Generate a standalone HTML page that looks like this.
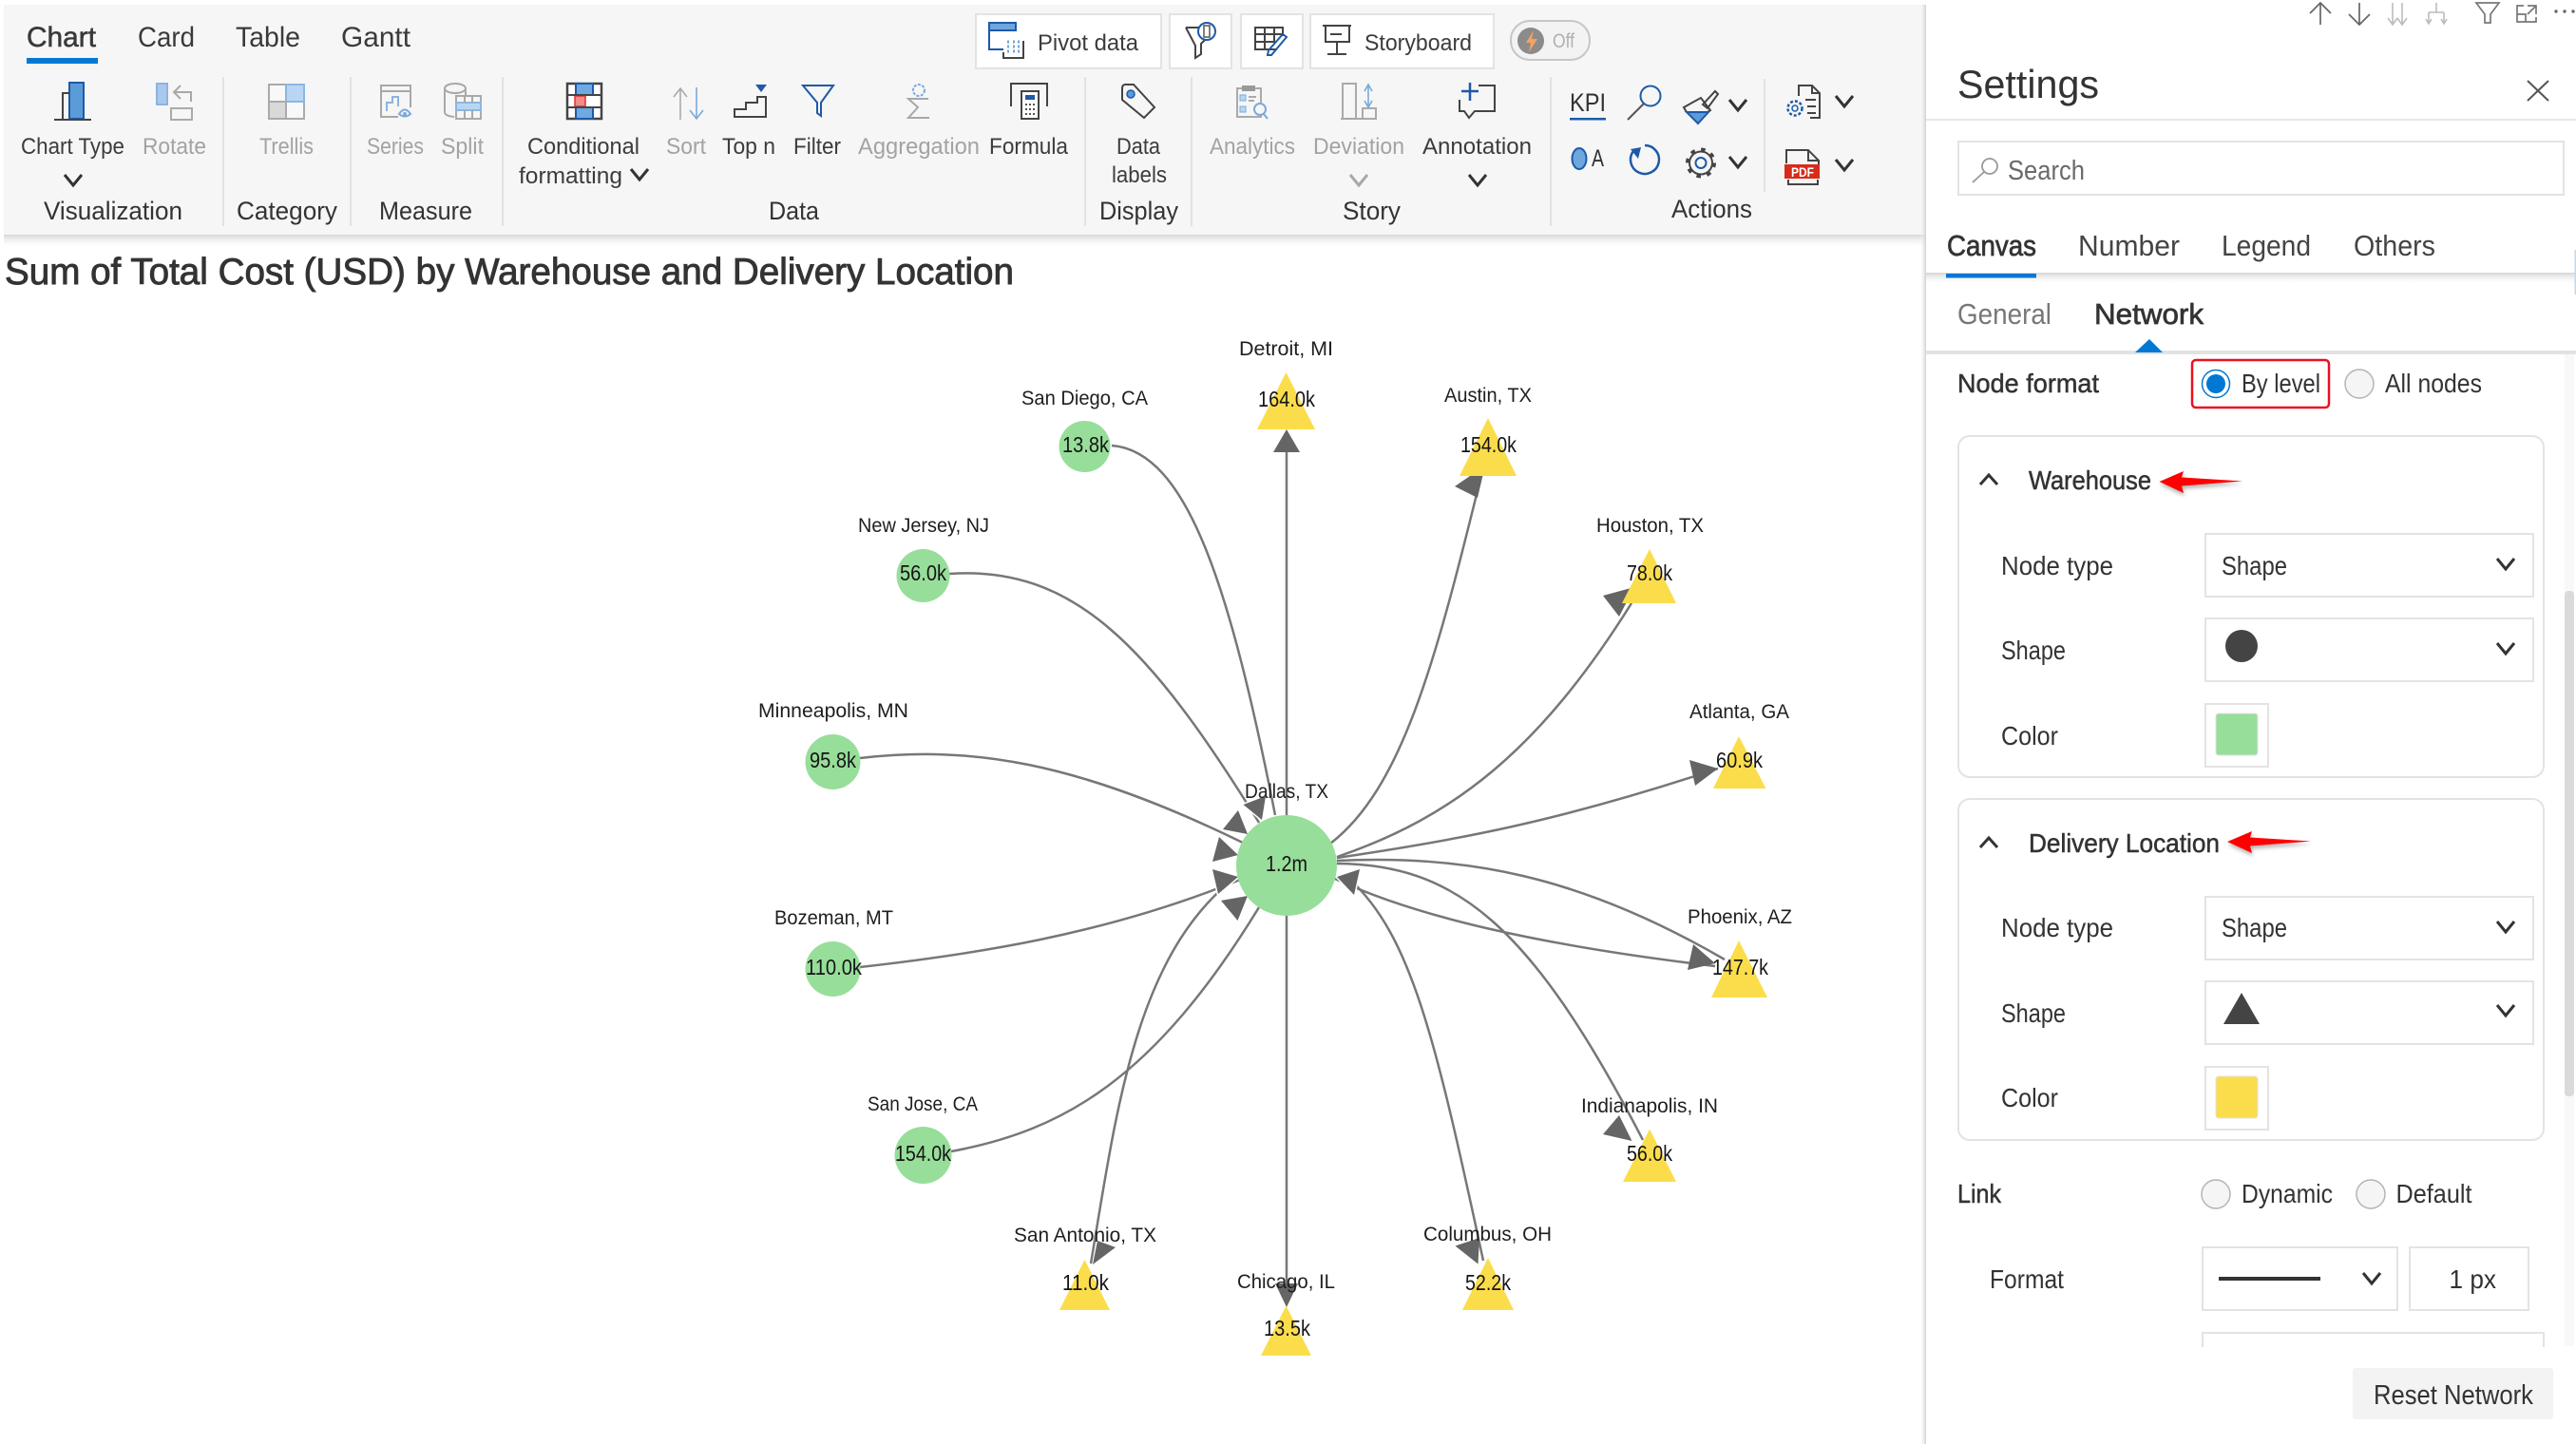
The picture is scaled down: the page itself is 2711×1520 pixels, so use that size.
<!DOCTYPE html>
<html lang="en">
<head>
<meta charset="utf-8">
<title>Network chart settings</title>
<style>
html,body{margin:0;padding:0;background:#fff;width:2711px;height:1520px;overflow:hidden}
svg{display:block;font-family:"Liberation Sans",Arial,sans-serif}
text{fill:#333}
.tab{font-size:30px;fill:#3a3a3a}
.r{font-size:24.5px;fill:#3c3c3c}
.g{font-size:24.5px;fill:#a3a3a3}
.h{font-size:27px;fill:#333}
.s{font-size:27.5px;fill:#333}
.m{stroke:#333;stroke-width:.5}
.n{font-size:21.500px;fill:#1e1e1e}
.v{font-size:23px;fill:#151515}
.i{fill:none;stroke:#444;stroke-width:2}
.b{fill:none;stroke:#1d5aa8;stroke-width:2}
.a{fill:none;stroke:#a8a8a8;stroke-width:2}
.l{fill:none;stroke:#777;stroke-width:2.5}
.c{fill:none;stroke:#333;stroke-width:3}
.bx{fill:#fff;stroke:#e3e3e3;stroke-width:2}
</style>
</head>
<body>
<svg width="2711" height="1520" viewBox="0 0 2711 1520" xmlns="http://www.w3.org/2000/svg">
<defs>
<path id="ch" d="M-9,-6 L0,5 L9,-6"/>
<linearGradient id="sd" x1="0" y1="0" x2="0" y2="1"><stop offset="0" stop-color="#d6d6d6"/><stop offset="1" stop-color="#fff" stop-opacity="0"/></linearGradient>
<linearGradient id="sl" x1="0" y1="0" x2="1" y2="0"><stop offset="0" stop-color="#fff" stop-opacity="0"/><stop offset="1" stop-color="#d0d0d0"/></linearGradient>
<filter id="ds" x="-20%" y="-50%" width="140%" height="220%"><feDropShadow dx="1" dy="3" stdDeviation="2" flood-color="#000" flood-opacity=".3"/></filter>
</defs>

<rect width="2711" height="1520" fill="#fff"/>

<!-- Ribbon -->
<rect x="4" y="5" width="2023" height="242" fill="#f6f6f6"/>
<rect x="4" y="247" width="2023" height="14" fill="url(#sd)"/>

<text class="tab m" x="28" y="49" textLength="73" lengthAdjust="spacingAndGlyphs">Chart</text>
<text class="tab" x="145" y="49" textLength="60" lengthAdjust="spacingAndGlyphs">Card</text>
<text class="tab" x="248" y="49" textLength="68" lengthAdjust="spacingAndGlyphs">Table</text>
<text class="tab" x="359" y="49" textLength="73" lengthAdjust="spacingAndGlyphs">Gantt</text>
<rect x="28" y="61" width="75" height="6" fill="#0078d4"/>

<!-- Ribbon separators -->
<g stroke="#e2e2e2" stroke-width="2">
<path d="M235 81V238M369 81V238M529 81V238M1142 81V238M1254 81V238M1632 81V238M1857 83V202"/>
</g>

<!-- Ribbon labels -->
<text class="r" x="22" y="162" textLength="109" lengthAdjust="spacingAndGlyphs">Chart Type</text>
<text class="g" x="150" y="162" textLength="67" lengthAdjust="spacingAndGlyphs">Rotate</text>
<text class="g" x="273" y="162" textLength="57" lengthAdjust="spacingAndGlyphs">Trellis</text>
<text class="g" x="386" y="162" textLength="60" lengthAdjust="spacingAndGlyphs">Series</text>
<text class="g" x="464" y="162" textLength="45" lengthAdjust="spacingAndGlyphs">Split</text>
<text class="r" x="555" y="162" textLength="118" lengthAdjust="spacingAndGlyphs">Conditional</text>
<text class="r" x="546" y="193" textLength="109" lengthAdjust="spacingAndGlyphs">formatting</text>
<text class="g" x="701" y="162" textLength="42" lengthAdjust="spacingAndGlyphs">Sort</text>
<text class="r" x="760" y="162" textLength="56" lengthAdjust="spacingAndGlyphs">Top n</text>
<text class="r" x="835" y="162" textLength="50" lengthAdjust="spacingAndGlyphs">Filter</text>
<text class="g" x="903" y="162" textLength="128" lengthAdjust="spacingAndGlyphs">Aggregation</text>
<text class="r" x="1041" y="162" textLength="83" lengthAdjust="spacingAndGlyphs">Formula</text>
<text class="r" x="1175" y="162" textLength="46" lengthAdjust="spacingAndGlyphs">Data</text>
<text class="r" x="1170" y="192" textLength="58" lengthAdjust="spacingAndGlyphs">labels</text>
<text class="g" x="1273" y="162" textLength="90" lengthAdjust="spacingAndGlyphs">Analytics</text>
<text class="g" x="1382" y="162" textLength="96" lengthAdjust="spacingAndGlyphs">Deviation</text>
<text class="r" x="1497" y="162" textLength="115" lengthAdjust="spacingAndGlyphs">Annotation</text>

<text class="h" x="46" y="231" textLength="146" lengthAdjust="spacingAndGlyphs">Visualization</text>
<text class="h" x="249" y="231" textLength="106" lengthAdjust="spacingAndGlyphs">Category</text>
<text class="h" x="399" y="231" textLength="98" lengthAdjust="spacingAndGlyphs">Measure</text>
<text class="h" x="809" y="231" textLength="53" lengthAdjust="spacingAndGlyphs">Data</text>
<text class="h" x="1157" y="231" textLength="83" lengthAdjust="spacingAndGlyphs">Display</text>
<text class="h" x="1413" y="231" textLength="61" lengthAdjust="spacingAndGlyphs">Story</text>
<text class="h" x="1759" y="229" textLength="85" lengthAdjust="spacingAndGlyphs">Actions</text>

<!-- Ribbon chevrons -->
<use href="#ch" x="77" y="190" class="c"/>
<use href="#ch" x="673" y="184" class="c"/>
<use href="#ch" x="1430" y="190" fill="none" stroke="#a8a8a8" stroke-width="3"/>
<use href="#ch" x="1555" y="190" class="c"/>
<use href="#ch" x="1829" y="111" class="c"/>
<use href="#ch" x="1829" y="171" class="c"/>
<use href="#ch" x="1941" y="107" class="c"/>
<use href="#ch" x="1941" y="174" class="c"/>

<!-- Top buttons -->
<rect x="1027" y="15" width="195" height="57" class="bx"/>
<rect x="1231" y="15" width="65" height="57" class="bx"/>
<rect x="1306" y="15" width="65" height="57" class="bx"/>
<rect x="1379" y="15" width="193" height="57" class="bx"/>
<text class="r" x="1092" y="53" textLength="106" lengthAdjust="spacingAndGlyphs">Pivot  data</text>
<text class="r" x="1436" y="53" textLength="113" lengthAdjust="spacingAndGlyphs">Storyboard</text>
<!-- pivot icon -->
<rect x="1041" y="24" width="28" height="8" fill="#6ea6de" stroke="#1d5aa8" stroke-width="2"/>
<path class="b" d="M1041 32V52H1056"/>
<path class="i" d="M1077 43V61H1056V55"/>
<path d="M1060 44h2M1066 44h2M1071 44h2M1060 49h2M1066 49h2M1071 49h2M1060 54h2M1066 54h2M1071 54h2" stroke="#6ea6de" stroke-width="3"/>
<!-- filter icon -->
<path class="i" d="M1248 29H1262M1248 29L1258 48V61L1264 57V46L1268 42"/>
<circle cx="1270" cy="33" r="9" class="b"/>
<rect x="1267" y="27" width="6" height="12" fill="none" stroke="#555" stroke-width="1.5"/>
<!-- edit grid -->
<path class="i" d="M1344 52H1321V29H1350V38M1321 36H1350M1321 44H1342M1331 29V52M1341 29V44"/>
<path class="b" d="M1354 39L1338 58L1334 58L1335 53L1350 36Z"/>
<!-- storyboard -->
<path class="i" d="M1392 27H1422M1395 27V44H1420V27M1400 36H1412M1407 44V57M1397 57H1417"/>
<!-- toggle -->
<rect x="1590" y="22" width="83" height="41" rx="20" fill="#f3f3f3" stroke="#c6c6c6" stroke-width="2"/>
<circle cx="1611" cy="43" r="14" fill="#8b8b8b"/>
<path d="M1614 32L1606 45H1611L1609 55L1618 41H1612Z" fill="#f5a263"/>
<text x="1634" y="50" font-size="21" style="fill:#b0b0b0" textLength="23" lengthAdjust="spacingAndGlyphs">Off</text>

<!-- Ribbon icons -->
<rect x="73" y="87" width="15" height="38" fill="#5b9bd8" stroke="#1d5aa8" stroke-width="2"/>
<path class="i" d="M73 98H66V125M57 126H96"/>

<rect x="165" y="88" width="11" height="22" fill="#a9c9ec" stroke="#8db3de" stroke-width="2"/>
<path class="a" d="M201 107V97H184M190 90L183 97L190 104"/>
<rect x="180" y="114" width="22" height="12" fill="#f6f6f6" stroke="#aaa" stroke-width="2"/>

<rect x="283" y="89" width="37" height="36" fill="#f8f8f8" stroke="#aaa" stroke-width="2"/>
<rect x="301" y="89" width="19" height="18" fill="#b8d6f3" stroke="#8ab7e4" stroke-width="2"/>
<rect x="283" y="107" width="18" height="18" fill="#d9d9d9" stroke="#aaa" stroke-width="2"/>

<path class="a" d="M419 123H401V90H432V113M401 96H432"/>
<path d="M407 117V108H413V102H419V112" fill="none" stroke="#8db3de" stroke-width="2"/>
<path d="M420 120Q426 111 432 120Q426 125 420 120Z" fill="none" stroke="#7ba9dc" stroke-width="2"/>
<circle cx="426" cy="120" r="2" fill="#7ba9dc"/>

<ellipse cx="479" cy="93" rx="11" ry="5" class="a"/>
<path class="a" d="M468 93V118Q468 122 478 123M490 93V101"/>
<rect x="480" y="101" width="26" height="24" fill="none" stroke="#aaa" stroke-width="2"/>
<rect x="480" y="108" width="26" height="8" fill="#b8d6f3" stroke="#8ab7e4" stroke-width="2"/>
<path class="a" d="M489 116V125M497 116V125M489 101V108M497 101V108"/>

<rect x="597" y="88" width="36" height="37" fill="#fff" stroke="#444" stroke-width="2.5"/>
<rect x="606" y="88" width="18" height="12" fill="#6ea9e2" stroke="#1d5aa8" stroke-width="2"/>
<rect x="606" y="113" width="18" height="12" fill="#6ea9e2" stroke="#1d5aa8" stroke-width="2"/>
<rect x="605" y="101" width="11" height="11" fill="#f58a8a" stroke="#d33" stroke-width="1.5"/>
<path class="i" d="M597 100H633M597 113H633"/>

<path d="M716 126V93M709 102L716 93L723 102" fill="none" stroke="#aaa" stroke-width="1.6"/>
<path d="M733 92V125M726 116L733 125L740 116" fill="none" stroke="#7ba9dc" stroke-width="1.6"/>

<path class="i" d="M773 123V115H785V108H797V102H806V123Z"/>
<path d="M795 89H807L801 97Z" fill="#1d5aa8"/>

<path class="b" d="M845 90H877L864 108V122L860 119V108Z"/>

<path class="a" d="M977 104H956L966 113L956 124H978"/>
<circle cx="967" cy="95" r="6" fill="none" stroke="#7ba9dc" stroke-width="2" stroke-dasharray="3 1.5"/>

<path class="i" d="M1064 112V88H1102V112"/>
<rect x="1075" y="96" width="18" height="29" fill="#fff" stroke="#444" stroke-width="2"/>
<rect x="1079" y="100" width="10" height="5" fill="#1d5aa8"/>
<path d="M1079 110h2M1083 110h2M1087 110h2M1079 115h2M1083 115h2M1087 115h2M1079 120h2M1083 120h2M1087 120h2" stroke="#555" stroke-width="2"/>

<path class="i" d="M1181 93Q1181 88 1187 89L1193 89L1215 113L1204 124L1181 105Z"/>
<circle cx="1190" cy="99" r="4" fill="#5b9bd8" stroke="#1d5aa8" stroke-width="1.5"/>

<rect x="1302" y="93" width="25" height="30" fill="none" stroke="#aaa" stroke-width="2"/>
<rect x="1307" y="90" width="14" height="6" fill="#999"/>
<rect x="1305" y="100" width="6" height="6" fill="#b8d6f3" stroke="#7ba9dc"/>
<rect x="1305" y="112" width="6" height="6" fill="#b8d6f3" stroke="#7ba9dc"/>
<path d="M1314 102h8M1314 106h6" stroke="#aaa" stroke-width="2"/>
<circle cx="1326" cy="115" r="6" fill="#f6f6f6" stroke="#7ba9dc" stroke-width="2"/>
<path d="M1330 120L1334 125" stroke="#7ba9dc" stroke-width="2"/>

<rect x="1413" y="88" width="14" height="37" fill="none" stroke="#aaa" stroke-width="2"/>
<path class="a" d="M1411 125H1449"/>
<rect x="1434" y="114" width="14" height="11" fill="none" stroke="#aaa" stroke-width="2"/>
<path d="M1440 90V112M1436 96L1440 89L1444 96M1436 106L1440 113L1444 106" fill="none" stroke="#7ba9dc" stroke-width="1.6"/>

<path class="i" d="M1556 90H1573V117H1552L1546 124L1541 117H1536V105"/>
<path d="M1538 96H1556M1547 87V106" stroke="#1d5aa8" stroke-width="2.5"/>

<text x="1652" y="117" font-size="27" style="fill:#333" textLength="38" lengthAdjust="spacingAndGlyphs">KPI</text>
<rect x="1652" y="124" width="38" height="2.5" fill="#1d5aa8"/>

<circle cx="1737" cy="101" r="10.5" class="b"/>
<path d="M1730 109L1713 126" stroke="#555" stroke-width="2"/>

<path class="i" d="M1805 96L1808 99L1797 114L1792 110ZM1772 113L1790 103L1800 116L1797 118H1775Z"/>
<path d="M1775 118H1798L1787 130Z" fill="#5b9bd8" stroke="#1d5aa8" stroke-width="2"/>

<path class="i" d="M1893 101V90H1907L1915 98V124H1905M1907 90V98H1915M1900 105H1911M1902 112H1911M1902 119H1911"/>
<circle cx="1889" cy="114" r="7.5" fill="none" stroke="#1d5aa8" stroke-width="2.5" stroke-dasharray="3 2"/>
<circle cx="1889" cy="114" r="3" fill="none" stroke="#1d5aa8" stroke-width="1.5"/>

<ellipse cx="1662" cy="167" rx="7.5" ry="11" fill="#6ea6de" stroke="#1d5aa8" stroke-width="2"/>
<text x="1675" y="175" font-size="25" style="fill:#333" textLength="13" lengthAdjust="spacingAndGlyphs">A</text>

<path d="M1731 153A15 15 0 1 1 1719 159" fill="none" stroke="#1d5aa8" stroke-width="2.5"/>
<path d="M1716 157L1727 155L1724 167Z" fill="#1d5aa8"/>

<circle cx="1790" cy="171.500" r="14" fill="none" stroke="#444" stroke-width="4" stroke-dasharray="4.500 6.500"/>
<circle cx="1790" cy="171.500" r="12" class="i"/>
<circle cx="1790" cy="171.500" r="5.500" class="b"/>

<path class="i" d="M1880 172V158H1903L1914 169V173M1903 158V169H1914M1882 189V194H1913V189"/>
<rect x="1878" y="173" width="37" height="15" fill="#d62c1a"/>
<text x="1885" y="186" font-size="14" font-weight="bold" style="fill:#fff" textLength="24" lengthAdjust="spacingAndGlyphs">PDF</text>

<!-- Title -->
<text x="5" y="299" font-size="39" style="fill:#333;stroke:#333;stroke-width:.9" textLength="1062" lengthAdjust="spacingAndGlyphs">Sum of Total Cost (USD) by Warehouse and Delivery Location</text>

<!-- Network links -->
<path class="l" d="M1354 476V1352"/>
<path class="l" d="M1170 469C1250 475 1295 620 1342 858"/>
<path class="l" d="M999 604C1130 595 1210 680 1325 866"/>
<path class="l" d="M905 798C1020 785 1130 800 1310 888"/>
<path class="l" d="M905 1018C1020 1005 1160 985 1305 926"/>
<path class="l" d="M1001 1212C1120 1190 1215 1135 1325 955"/>
<path class="l" d="M1148 1330C1175 1170 1195 1000 1305 920"/>
<path class="l" d="M1400 888C1475 830 1510 700 1559 500"/>
<path class="l" d="M1407 902C1530 860 1620 790 1717 635"/>
<path class="l" d="M1407 903C1530 885 1640 865 1808 809"/>
<path class="l" d="M1407 906C1540 900 1660 920 1815 1010"/>
<path class="l" d="M1405 925C1490 965 1620 995 1805 1017"/>
<path class="l" d="M1407 909C1530 910 1610 970 1729 1200"/>
<path class="l" d="M1420 925C1485 985 1510 1090 1561 1327"/>

<!-- Arrowheads -->
<g fill="#656565">
<path d="M1354 452L1368 476H1340Z"/>
<path d="M1531 512L1555 524L1563 490Z"/>
<path d="M1687 627L1704 649L1720 618Z"/>
<path d="M1778 800L1784 827L1808 809Z"/>
<path d="M1782 994L1776 1021L1805 1014Z"/>
<path d="M1174 1313L1150 1331L1155 1306Z"/>
<path d="M1342 1351H1366L1354 1376Z"/>
<path d="M1531.500 1311.500L1555.500 1330.500L1557 1303Z"/>
<path d="M1704 1174L1687 1194L1717.500 1201Z"/>
</g>
<g fill="#656565" stroke="#fff" stroke-width="3" paint-order="stroke">
<path d="M1308.500 847L1332 838L1328 863Z"/>
<path d="M1303 853L1287 873L1313 878Z"/>
<path d="M1283 881L1276 907L1303 900Z"/>
<path d="M1276 915L1282 941L1303 923Z"/>
<path d="M1285 948L1302.500 969L1313 943Z"/>
<path d="M1431 915L1425 942L1407 923Z"/>
</g>

<!-- Nodes -->
<g fill="#97de9a">
<circle cx="1354" cy="911" r="53"/>
<circle cx="1141.500" cy="470" r="27"/>
<circle cx="971.500" cy="606" r="28"/>
<circle cx="876.500" cy="802" r="29"/>
<circle cx="876.500" cy="1020" r="29"/>
<circle cx="971.500" cy="1216" r="30"/>
</g>
<g fill="#fbdd4c">
<path d="M1353.500 392L1384 452H1323Z"/>
<path d="M1566 440L1596 501H1536Z"/>
<path d="M1736 578L1764 635H1707Z"/>
<path d="M1830 775L1858.500 830H1803Z"/>
<path d="M1830 990L1860 1050H1801Z"/>
<path d="M1736 1188.500L1764 1244H1708Z"/>
<path d="M1566 1324L1593 1379H1539Z"/>
<path d="M1353.500 1374.500L1380 1427H1327Z"/>
<path d="M1141.500 1326L1168 1379H1115Z"/>
</g>

<!-- Node labels -->
<text class="n" x="1310" y="840" textLength="88" lengthAdjust="spacingAndGlyphs">Dallas, TX</text>
<text class="v" x="1332" y="917" textLength="44" lengthAdjust="spacingAndGlyphs">1.2m</text>
<text class="n" x="1075" y="426" textLength="133" lengthAdjust="spacingAndGlyphs">San Diego, CA</text>
<text class="v" x="1118" y="476" textLength="49" lengthAdjust="spacingAndGlyphs">13.8k</text>
<text class="n" x="903" y="560" textLength="138" lengthAdjust="spacingAndGlyphs">New Jersey, NJ</text>
<text class="v" x="947" y="611" textLength="49" lengthAdjust="spacingAndGlyphs">56.0k</text>
<text class="n" x="798" y="755" textLength="158" lengthAdjust="spacingAndGlyphs">Minneapolis, MN</text>
<text class="v" x="852" y="808" textLength="49" lengthAdjust="spacingAndGlyphs">95.8k</text>
<text class="n" x="815" y="973" textLength="125" lengthAdjust="spacingAndGlyphs">Bozeman, MT</text>
<text class="v" x="848" y="1026" textLength="59" lengthAdjust="spacingAndGlyphs">110.0k</text>
<text class="n" x="913" y="1169" textLength="116" lengthAdjust="spacingAndGlyphs">San Jose, CA</text>
<text class="v" x="942" y="1222" textLength="59" lengthAdjust="spacingAndGlyphs">154.0k</text>
<text class="n" x="1304" y="374" textLength="99" lengthAdjust="spacingAndGlyphs">Detroit, MI</text>
<text class="v" x="1324" y="428" textLength="60" lengthAdjust="spacingAndGlyphs">164.0k</text>
<text class="n" x="1520" y="423" textLength="92" lengthAdjust="spacingAndGlyphs">Austin, TX</text>
<text class="v" x="1537" y="476" textLength="59" lengthAdjust="spacingAndGlyphs">154.0k</text>
<text class="n" x="1680" y="560" textLength="113" lengthAdjust="spacingAndGlyphs">Houston, TX</text>
<text class="v" x="1712" y="611" textLength="48" lengthAdjust="spacingAndGlyphs">78.0k</text>
<text class="n" x="1778" y="756" textLength="105" lengthAdjust="spacingAndGlyphs">Atlanta, GA</text>
<text class="v" x="1806" y="808" textLength="49" lengthAdjust="spacingAndGlyphs">60.9k</text>
<text class="n" x="1776" y="972" textLength="110" lengthAdjust="spacingAndGlyphs">Phoenix, AZ</text>
<text class="v" x="1802" y="1026" textLength="59" lengthAdjust="spacingAndGlyphs">147.7k</text>
<text class="n" x="1664" y="1171" textLength="144" lengthAdjust="spacingAndGlyphs">Indianapolis, IN</text>
<text class="v" x="1712" y="1222" textLength="48" lengthAdjust="spacingAndGlyphs">56.0k</text>
<text class="n" x="1498" y="1306" textLength="135" lengthAdjust="spacingAndGlyphs">Columbus, OH</text>
<text class="v" x="1542" y="1358" textLength="48" lengthAdjust="spacingAndGlyphs">52.2k</text>
<text class="n" x="1302" y="1356" textLength="103" lengthAdjust="spacingAndGlyphs">Chicago, IL</text>
<text class="v" x="1330" y="1406" textLength="49" lengthAdjust="spacingAndGlyphs">13.5k</text>
<text class="n" x="1067" y="1307" textLength="150" lengthAdjust="spacingAndGlyphs">San Antonio, TX</text>
<text class="v" x="1118" y="1358" textLength="49" lengthAdjust="spacingAndGlyphs">11.0k</text>

<!-- Settings panel -->
<rect x="2020" y="5" width="7" height="1515" fill="url(#sl)"/>
<rect x="2027" y="5" width="684" height="1515" fill="#fff"/>

<!-- Panel top icons -->
<path d="M2442 26V3M2431 14L2442 3L2453 14M2483 3V26M2472 15L2483 26L2494 15" fill="none" stroke="#666" stroke-width="1.7"/>
<path d="M2518 3V26M2513 19L2518 26L2523 19M2528 3V26M2523 19L2528 26L2533 19M2564 3V13M2556 13H2572M2556 13V25M2572 13V25M2553 20L2556 25L2559 20M2569 20L2572 25L2575 20" fill="none" stroke="#bcbcbc" stroke-width="1.6"/>
<path d="M2606 3H2630L2621 15V24H2615V15Z" fill="none" stroke="#777" stroke-width="1.7"/>
<path d="M2660 6H2669V15M2669 6L2660 15M2656 6H2649V23H2669V18M2649 15H2658V23" fill="none" stroke="#777" stroke-width="1.7"/>
<g fill="#666"><circle cx="2690" cy="12" r="1.700"/><circle cx="2699" cy="12" r="1.700"/><circle cx="2708" cy="12" r="1.700"/></g>

<text x="2060" y="103" font-size="42" style="fill:#333" textLength="149" lengthAdjust="spacingAndGlyphs">Settings</text>
<path d="M2660 85L2682 106M2682 85L2660 106" stroke="#555" stroke-width="2"/>
<rect x="2027" y="125" width="684" height="2" fill="#e8e8e8"/>

<rect x="2061" y="149" width="637" height="56" class="bx"/>
<circle cx="2094" cy="175" r="8" fill="none" stroke="#999" stroke-width="1.800"/>
<path d="M2088 181L2076 192" stroke="#999" stroke-width="1.800"/>
<text x="2113" y="189" font-size="28.500" style="fill:#6a6a6a" textLength="81" lengthAdjust="spacingAndGlyphs">Search</text>

<!-- Main tabs -->
<rect x="2027" y="227" width="684" height="60" fill="#fff"/>
<rect x="2027" y="287" width="684" height="13" fill="url(#sd)"/>
<text x="2049" y="269" font-size="31" style="fill:#333;stroke:#333;stroke-width:.7" textLength="94" lengthAdjust="spacingAndGlyphs">Canvas</text>
<text x="2187" y="269" font-size="31" style="fill:#444" textLength="107" lengthAdjust="spacingAndGlyphs">Number</text>
<text x="2338" y="269" font-size="31" style="fill:#444" textLength="94" lengthAdjust="spacingAndGlyphs">Legend</text>
<text x="2477" y="269" font-size="31" style="fill:#444" textLength="86" lengthAdjust="spacingAndGlyphs">Others</text>
<rect x="2048" y="288" width="95" height="4.500" fill="#0078d4"/>
<rect x="2709.500" y="263" width="1.500" height="47" fill="#c4d8ec"/>

<!-- Sub tabs -->
<text x="2060" y="341" font-size="30.500" style="fill:#777" textLength="99" lengthAdjust="spacingAndGlyphs">General</text>
<text x="2204" y="341" font-size="30.500" style="fill:#333;stroke:#333;stroke-width:.7" textLength="115" lengthAdjust="spacingAndGlyphs">Network</text>
<rect x="2027" y="369" width="684" height="4" fill="#e2e2e2"/>
<path d="M2247 371L2262 357L2276 371Z" fill="#0078d4"/>

<!-- Scrollbar -->
<rect x="2699" y="373" width="10" height="1044" fill="#f8f8f8"/>
<rect x="2699" y="622" width="10" height="532" rx="4" fill="#dadada"/>

<!-- Node format -->
<text class="s m" x="2060" y="413" textLength="149" lengthAdjust="spacingAndGlyphs">Node format</text>
<rect x="2307" y="379" width="144" height="50" rx="4" fill="#fff" stroke="#e81123" stroke-width="2.500"/>
<circle cx="2332" cy="404" r="14.500" fill="#fff" stroke="#0078d4" stroke-width="1.500"/>
<circle cx="2332" cy="404" r="10" fill="#0078d4"/>
<text class="s" x="2359" y="413" textLength="83" lengthAdjust="spacingAndGlyphs">By level</text>
<circle cx="2483" cy="404" r="15" fill="#f5f5f5" stroke="#b4b4b4" stroke-width="1.500"/>
<text class="s" x="2510" y="413" textLength="102" lengthAdjust="spacingAndGlyphs">All nodes</text>

<!-- Warehouse card -->
<rect x="2061" y="459" width="616" height="359" rx="12" fill="#fff" stroke="#e3e3e3" stroke-width="2"/>
<path d="M2084 510L2093 500L2102 510" fill="none" stroke="#333" stroke-width="3"/>
<text class="s m" x="2135" y="515" textLength="129" lengthAdjust="spacingAndGlyphs">Warehouse</text>
<path d="M2272.500 507L2298 496L2296 502.500L2360 506.500L2296 511.500L2298 519Z" fill="#ff0000" filter="url(#ds)"/>

<text class="s" x="2106" y="605" textLength="118" lengthAdjust="spacingAndGlyphs">Node type</text>
<rect x="2321" y="562" width="345" height="66" class="bx"/>
<text class="s" x="2338" y="605" textLength="69" lengthAdjust="spacingAndGlyphs">Shape</text>
<use href="#ch" x="2637" y="594" class="c"/>

<text class="s" x="2106" y="694" textLength="68" lengthAdjust="spacingAndGlyphs">Shape</text>
<rect x="2321" y="651" width="345" height="66" class="bx"/>
<circle cx="2359" cy="680" r="17" fill="#444"/>
<use href="#ch" x="2637" y="683" class="c"/>

<text class="s" x="2106" y="784" textLength="60" lengthAdjust="spacingAndGlyphs">Color</text>
<rect x="2321" y="741" width="66" height="66" class="bx"/>
<rect x="2332" y="751" width="44" height="44" rx="3" fill="#97de9a" stroke="#e2e2e2"/>

<!-- Delivery card -->
<rect x="2061" y="841" width="616" height="359" rx="12" fill="#fff" stroke="#e3e3e3" stroke-width="2"/>
<path d="M2084 892L2093 882L2102 892" fill="none" stroke="#333" stroke-width="3"/>
<text class="s m" x="2135" y="897" textLength="201" lengthAdjust="spacingAndGlyphs">Delivery Location</text>
<path d="M2344 886L2370 875L2368 881.500L2432 885.500L2368 890.500L2370 898Z" fill="#ff0000" filter="url(#ds)"/>

<text class="s" x="2106" y="986" textLength="118" lengthAdjust="spacingAndGlyphs">Node type</text>
<rect x="2321" y="944" width="345" height="66" class="bx"/>
<text class="s" x="2338" y="986" textLength="69" lengthAdjust="spacingAndGlyphs">Shape</text>
<use href="#ch" x="2637" y="976" class="c"/>

<text class="s" x="2106" y="1076" textLength="68" lengthAdjust="spacingAndGlyphs">Shape</text>
<rect x="2321" y="1033" width="345" height="66" class="bx"/>
<path d="M2359 1045L2378 1078H2340Z" fill="#444"/>
<use href="#ch" x="2637" y="1064" class="c"/>

<text class="s" x="2106" y="1165" textLength="60" lengthAdjust="spacingAndGlyphs">Color</text>
<rect x="2321" y="1123" width="66" height="66" class="bx"/>
<rect x="2332" y="1133" width="44" height="44" rx="3" fill="#fbdd4c" stroke="#e2e2e2"/>

<!-- Link -->
<text class="s m" x="2060" y="1266" textLength="46" lengthAdjust="spacingAndGlyphs">Link</text>
<circle cx="2332" cy="1257" r="15" fill="#f5f5f5" stroke="#b4b4b4" stroke-width="1.500"/>
<text class="s" x="2359" y="1266" textLength="96" lengthAdjust="spacingAndGlyphs">Dynamic</text>
<circle cx="2495" cy="1257" r="15" fill="#f5f5f5" stroke="#b4b4b4" stroke-width="1.500"/>
<text class="s" x="2521.500" y="1266" textLength="80" lengthAdjust="spacingAndGlyphs">Default</text>

<text class="s" x="2094" y="1356" textLength="78" lengthAdjust="spacingAndGlyphs">Format</text>
<rect x="2318" y="1313" width="205" height="66" class="bx"/>
<rect x="2335" y="1344" width="107" height="4" fill="#333"/>
<use href="#ch" x="2496" y="1346" class="c"/>
<rect x="2536" y="1313" width="125" height="66" class="bx"/>
<text class="s" x="2577.500" y="1356" textLength="49.500" lengthAdjust="spacingAndGlyphs">1  px</text>

<path d="M2318 1418V1403H2677V1418" fill="none" stroke="#e3e3e3" stroke-width="2"/>

<!-- Reset -->
<rect x="2476" y="1440" width="211" height="54" rx="3" fill="#f3f3f3"/>
<text x="2498" y="1478" font-size="28.500" style="fill:#333" textLength="168" lengthAdjust="spacingAndGlyphs">Reset Network</text>
</svg>
</body>
</html>
